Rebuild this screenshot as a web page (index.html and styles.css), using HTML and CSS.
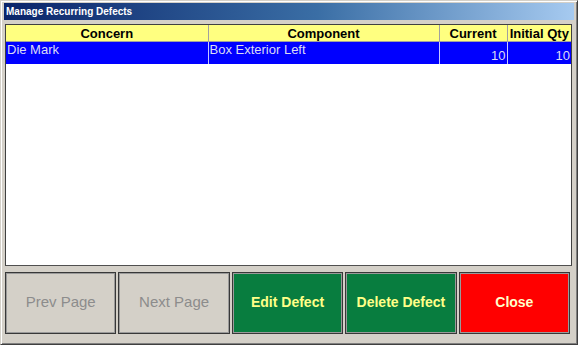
FILE: index.html
```html
<!DOCTYPE html>
<html lang="en">
<head>
    <meta charset="UTF-8">
    <meta name="viewport" content="width=device-width, initial-scale=1.0">
    <title>Manage Recurring Defects</title>
    <link rel="stylesheet" href="styles.css">
</head>
<body>
    <div class="window">
        <div class="titlebar">Manage Recurring Defects</div>
        <div class="grid">
            <table class="defects">
                <colgroup>
                    <col class="col-concern">
                    <col class="col-component">
                    <col class="col-current">
                    <col class="col-initial">
                </colgroup>
                <thead>
                    <tr>
                        <th>Concern</th>
                        <th>Component</th>
                        <th>Current</th>
                        <th>Initial Qty</th>
                    </tr>
                </thead>
                <tbody>
                    <tr class="selected">
                        <td>Die Mark</td>
                        <td>Box Exterior Left</td>
                        <td class="num">10</td>
                        <td class="num">10</td>
                    </tr>
                </tbody>
            </table>
        </div>
        <div class="buttons">
            <div class="button disabled">Prev Page</div>
            <div class="button disabled">Next Page</div>
            <div class="button green">Edit Defect</div>
            <div class="button green">Delete Defect</div>
            <div class="button red">Close</div>
        </div>
    </div>
</body>
</html>
```

FILE: styles.css
```css
html, body{
    margin: 0;
    padding: 0;
    font-family: "Liberation Sans", Arial, sans-serif;
}
.window{
    width: 578px;
    height: 345px;
    box-sizing: border-box;
    background: #d4d0c8;
    border-top: 1px solid #d4d0c8;
    border-left: 1px solid #d4d0c8;
    border-right: 1px solid #404040;
    border-bottom: 1px solid #404040;
    box-shadow: inset 1px 1px 0 #ffffff, inset -1px -1px 0 #808080;
    padding: 2px 3px 0 3px;
}
.titlebar{
    height: 17px;
    line-height: 17px;
    padding-left: 2px;
    color: #ffffff;
    font-weight: bold;
    font-size: 10px;
    background: linear-gradient(to right, #0a246a, #3a6ea5 55%, #a6caf0);
}
.grid{
    margin: 4px 0 0 1px;
    width: 567px;
    height: 242px;
    box-sizing: border-box;
    background: #ffffff;
    border-top: 1px solid #404040;
    border-left: 1px solid #404040;
    border-right: 1px solid #404040;
    border-bottom: 1px solid #505050;
}
.defects{
    border-collapse: collapse;
    table-layout: fixed;
    width: 565px;
    font-size: 13px;
}
.col-concern{ width: 202px; }
.col-component{ width: 231px; }
.col-current{ width: 68px; }
.col-initial{ width: 64px; }
.defects th{
    background: #ffff80;
    color: #000000;
    font-weight: bold;
    height: 16px;
    padding: 0;
    text-align: center;
    white-space: nowrap;
    overflow: hidden;
    border-right: 1px solid #a0a0a0;
    border-bottom: 1px solid #a0a0a0;
}
.defects th:last-child{
    border-right: none;
}
.defects td{
    background: #0000ff;
    color: #dcdcf4;
    height: 21px;
    padding: 0 1px;
    vertical-align: top;
    white-space: nowrap;
    border-right: 1px solid #c8c8ff;
}
.defects td:last-child{
    border-right: none;
}
.defects td.num{
    text-align: right;
    vertical-align: bottom;
    padding-bottom: 1px;
}
.buttons{
    display: flex;
    gap: 2px;
    margin: 6px 0 0 1px;
    width: 565px;
    height: 62px;
}
.button{
    flex: 1;
    box-sizing: border-box;
    border: 1px solid #383838;
    box-shadow: inset 1px 1px 0 #9a9a9a, inset -1px -1px 0 #9a9a9a;
    display: flex;
    align-items: center;
    justify-content: center;
    padding-bottom: 3px;
    font-size: 14px;
    font-weight: bold;
    user-select: none;
    cursor: pointer;
}
.button.disabled{
    background: #d4d0c8;
    color: #8c8c8c;
    font-weight: normal;
    font-size: 15px;
}
.button.green{
    background: #087d3f;
    color: #ffff88;
}
.button.red{
    background: #ff0000;
    color: #ffffcc;
}
```
